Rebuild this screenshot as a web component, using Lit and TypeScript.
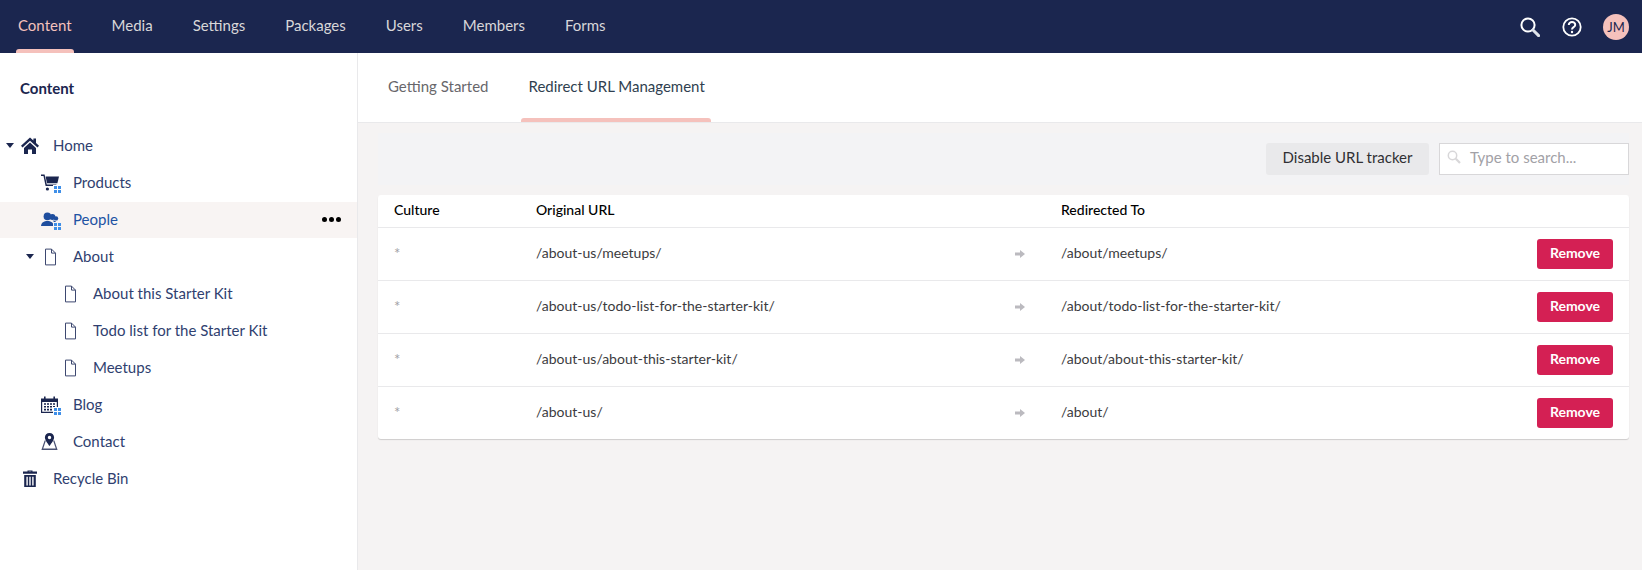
import { LitElement, html, css, svg } from "lit";
import { customElement } from "lit/decorators.js";

const NAV = ["Content", "Media", "Settings", "Packages", "Users", "Members", "Forms"];

const doc = svg`<path d="M1.5 .6H7.5L11.5 4.6V16.4H1.5Z" fill="#fff" stroke="#3d4870" stroke-width="1"/><path d="M7.5 .6V4.6H11.5" fill="none" stroke="#3d4870" stroke-width="1"/>`;

const ICONS: Record<string, any> = {
    home: svg`<path d="M9 .6L0 8.8 1.5 10.6 9 3.8 16.5 10.6 18 8.8 15 6V1.6H12.4V3.6Z"/><path d="M3 11L9 5.6 15 11V17H11V12.4H7V17H3Z"/>`,
    cart: svg`<path d="M0 .6H3.6L5.8 10.6H15.4V12H4.6L2.5 2H0Z"/><path d="M4.6 2.4H18L16.4 9.2H6Z"/><circle cx="6.4" cy="15" r="1.6"/><circle cx="13.6" cy="15" r="1.6"/>`,
    people: svg`<circle cx="6.4" cy="5.4" r="3.8"/><path d="M0 15C.3 11.4 3 10 6.4 10S12.4 11.4 12.8 15Z"/><circle cx="11.4" cy="6" r="3"/><path d="M11.6 9.6C14.4 9.8 15.8 11 16 13H13.6C13.4 11.6 12.8 10.6 11.6 9.6Z"/><circle cx="15" cy="7.4" r="2.2"/>`,
    calendar: svg`<path fill-rule="evenodd" d="M0 2.4H3V.4H4.6V2.4H12.4V.4H14V2.4H17V17H0ZM1.2 6V15.8H15.8V6Z"/><path d="M3 7.2H5V8.8H3ZM6 7.2H8V8.8H6ZM9 7.2H11V8.8H9ZM12 7.2H14V8.8H12ZM3 10H5V11.6H3ZM6 10H8V11.6H6ZM9 10H11V11.6H9ZM12 10H14V11.6H12ZM3 12.8H5V14.4H3ZM6 12.8H8V14.4H6ZM9 12.8H11V14.4H9Z"/>`,
    pin: svg`<path fill-rule="evenodd" d="M8.5 0C5.7 0 3.9 2 3.9 4.4 3.9 7 6.9 10.6 8.5 13 10.1 10.6 13.1 7 13.1 4.4 13.1 2 11.3 0 8.5 0ZM8.5 2.8A1.7 1.7 0 1 1 8.5 6.2 1.7 1.7 0 1 1 8.5 2.8Z"/><path d="M3.6 7.6H4.9L2.2 15.6H14.8L12.1 7.6H13.4L16.6 17H.4Z" fill-opacity=".8"/>`,
    trash: svg`<path d="M6.5 1.6V.4H11.5V1.6H16V3.8H2V1.6ZM7.8 1.6H10.2V1.2H7.8Z"/><path fill-rule="evenodd" d="M3.2 5H14.8V17H3.2ZM5.4 6.8V15.4H6.8V6.8ZM8.3 6.8V15.4H9.7V6.8ZM11.2 6.8V15.4H12.6V6.8Z"/>`,
};

const TREE = [
    { label: "Home", indent: 0, icon: "home", caret: true },
    { label: "Products", indent: 1, icon: "cart", badge: true },
    { label: "People", indent: 1, icon: "people", badge: true, active: true },
    { label: "About", indent: 1, icon: "doc", caret: true },
    { label: "About this Starter Kit", indent: 2, icon: "doc" },
    { label: "Todo list for the Starter Kit", indent: 2, icon: "doc" },
    { label: "Meetups", indent: 2, icon: "doc" },
    { label: "Blog", indent: 1, icon: "calendar", badge: true },
    { label: "Contact", indent: 1, icon: "pin" },
    { label: "Recycle Bin", indent: 0, icon: "trash" },
];

const REDIRECTS = [
    ["/about-us/meetups/", "/about/meetups/"],
    ["/about-us/todo-list-for-the-starter-kit/", "/about/todo-list-for-the-starter-kit/"],
    ["/about-us/about-this-starter-kit/", "/about/about-this-starter-kit/"],
    ["/about-us/", "/about/"],
];

@customElement("app-root")
export class AppRoot extends LitElement {
    static styles = css`
        :host {
            display: block;
            height: 570px;
            overflow: hidden;
            font-family: "Lato", "Open Sans", sans-serif;
            font-size: 15px;
            color: #1b264f;
            background: #fff;
        }
        .topbar {
            height: 53px;
            background: #1b264f;
            display: flex;
            align-items: stretch;
            justify-content: space-between;
            padding: 0 13px 0 0;
        }
        .nav {
            display: flex;
            padding-left: 18px;
            gap: 40px;
        }
        .nav-item {
            position: relative;
            line-height: 50px;
            color: #d8d7d9;
            white-space: nowrap;
        }
        .nav-item.on {
            color: #f5c1bc;
        }
        .nav-item.on::after {
            content: "";
            position: absolute;
            left: -2px;
            right: -2px;
            bottom: 0;
            height: 4px;
            background: #f5c1bc;
            border-radius: 3px 3px 0 0;
        }
        .tools {
            display: flex;
            align-items: center;
        }
        .tools svg {
            display: block;
        }
        .avatar {
            width: 26px;
            height: 26px;
            margin-left: 21px;
            border-radius: 50%;
            background: #f5c1bc;
            color: #1b264f;
            font-size: 13px;
            display: flex;
            align-items: center;
            justify-content: center;
        }
        .help {
            margin-left: 22px;
        }
        .body {
            display: flex;
            height: 517px;
        }
        .sidebar {
            width: 358px;
            flex: none;
            box-sizing: border-box;
            border-right: 1px solid #e9e9eb;
        }
        .sidebar h1 {
            margin: 0;
            padding: 26px 0 0 20px;
            height: 75px;
            box-sizing: border-box;
            font-size: 15px;
            font-weight: 700;
            line-height: 18px;
        }
        .row {
            height: 36px;
            margin-bottom: 1px;
            display: flex;
            align-items: center;
            position: relative;
        }
        .row.active {
            background: #f8f4f3;
        }
        .label {
            color: #303f70;
            padding-bottom: 3px;
        }
        .row.active .label {
            color: #2152a3;
        }
        .caret {
            width: 0;
            height: 0;
            border-left: 4px solid transparent;
            border-right: 4px solid transparent;
            border-top: 5px solid #1b264f;
            margin-right: 7px;
            margin-top: -2px;
        }
        .icon-wrap {
            position: relative;
            width: 18px;
            height: 18px;
            margin-right: 14px;
            flex: none;
            display: flex;
            justify-content: center;
            color: #1b264f;
        }
        .row.active .icon-wrap {
            color: #1f4e9e;
        }
        .icon-wrap svg {
            display: block;
        }
        .badge {
            position: absolute;
            right: -2px;
            bottom: -1px;
            width: 8px;
            height: 8px;
            background: #fff;
        }
        .row.active .badge {
            background: #f8f4f3;
        }
        .dots {
            position: absolute;
            right: 16px;
            top: 15px;
            display: flex;
            gap: 2px;
        }
        .dots i {
            width: 5px;
            height: 5px;
            border-radius: 50%;
            background: #000;
        }
        .main {
            flex: 1;
            background: #f5f3f3;
            min-width: 0;
        }
        .tabs {
            height: 70px;
            background: #fff;
            border-bottom: 1px solid #e9e9eb;
            display: flex;
            padding-left: 23px;
            box-sizing: border-box;
        }
        .tab {
            position: relative;
            padding: 0 6px 0 7px;
            margin-right: 27px;
            line-height: 67px;
            color: #68676b;
        }
        .tab.on {
            color: #303f50;
        }
        .tab.on::after {
            content: "";
            position: absolute;
            left: 0;
            right: 0;
            bottom: 0;
            height: 4px;
            background: #f5c1bc;
            border-radius: 3px 3px 0 0;
        }
        .content {
            padding: 10px 13px 0 20px;
        }
        .toolbar {
            display: flex;
            justify-content: flex-end;
            align-items: center;
            gap: 10px;
            height: 32px;
            padding: 10px 0;
            margin-bottom: 10px;
            background: #f3f3f5;
        }
        .toggle {
            height: 32px;
            width: 163px;
            border: 0;
            border-radius: 3px;
            background: #e9e9eb;
            color: #303033;
            font: 15px "Lato", sans-serif;
            padding: 0 0 5px;
        }
        .search {
            width: 190px;
            height: 32px;
            box-sizing: border-box;
            background: #fff;
            border: 1px solid #d8d7d9;
            display: flex;
            align-items: center;
            gap: 9px;
            padding: 0 0 5px 7px;
            color: #a2a1a6;
            font-size: 15px;
        }
        .card {
            background: #fff;
            border-radius: 3px;
            box-shadow: 0 1px 1px rgba(0, 0, 0, 0.16);
        }
        .tr {
            display: grid;
            grid-template-columns: 142px 479px 46px 1fr auto;
            align-items: center;
            padding: 0 16px;
            height: 53px;
            box-sizing: border-box;
            border-top: 1px solid #e9e9eb;
            font-size: 14px;
            color: #3b3b3e;
        }
        .tr span {
            padding-bottom: 4px;
        }
        .tr.head {
            height: 32px;
            border-top: 0;
            color: #000;
            font-weight: 500;
        }
        .tr .star {
            color: #a2a1a6;
            padding: 0;
            margin-top: -3px;
            font-size: 15px;
        }
        .arrow {
            display: block;
        }
        .remove {
            width: 76px;
            height: 30px;
            border: 0;
            border-radius: 3px;
            background: #d42054;
            color: #fff;
            font: 700 14px "Lato", sans-serif;
            padding: 0 0 3px;
        }
    `;

    renderIcon(name: string) {
        if (name === "doc") {
            return html`<svg width="13" height="18" viewBox="0 0 13 17" fill="none">${doc}</svg>`;
        }
        return html`<svg width="18" height="18" viewBox="0 0 18 18" fill="currentColor">${ICONS[name]}</svg>`;
    }

    renderRow(r: (typeof TREE)[number]) {
        // caret sits 15px to the left of the icon, each level steps 20px
        const left = 21 + r.indent * 20;
        return html`
            <div class="row ${r.active ? "active" : ""}" style="padding-left:${r.caret ? left - 15 : left}px">
                ${r.caret ? html`<span class="caret"></span>` : ""}
                <span class="icon-wrap">
                    ${this.renderIcon(r.icon)}
                    ${r.badge
                        ? html`<span class="badge">
                              <svg width="8" height="8" viewBox="0 0 8 8" fill="#3f8fe8">
                                  <rect x="1" y="1" width="3" height="3"/><rect x="5" y="1" width="3" height="3"/>
                                  <rect x="1" y="5" width="3" height="3"/><rect x="5" y="5" width="3" height="3"/>
                              </svg>
                          </span>`
                        : ""}
                </span>
                <span class="label">${r.label}</span>
                ${r.active ? html`<span class="dots"><i></i><i></i><i></i></span>` : ""}
            </div>
        `;
    }

    render() {
        return html`
            <header class="topbar">
                <nav class="nav">
                    ${NAV.map((n, i) => html`<div class="nav-item ${i === 0 ? "on" : ""}">${n}</div>`)}
                </nav>
                <div class="tools">
                    <svg width="20" height="20" viewBox="0 0 20 20" fill="none" stroke="#fff">
                        <circle cx="8" cy="8" r="6.6" stroke-width="2"/>
                        <path d="M13 13L18.6 18.6" stroke-width="3" stroke-linecap="round" stroke="#dfe3ea"/>
                    </svg>
                    <svg class="help" width="20" height="20" viewBox="0 0 20 20" fill="none" stroke="#fff">
                        <circle cx="10" cy="10" r="8.7" stroke-width="1.8"/>
                        <path d="M6.8 8C6.8 3.8 13.4 4.2 13.2 8 13.1 10.4 10 10 10 12.6" stroke-width="2"/>
                        <circle cx="10" cy="15" r="1.2" fill="#fff" stroke="none"/>
                    </svg>
                    <div class="avatar">JM</div>
                </div>
            </header>
            <div class="body">
                <aside class="sidebar">
                    <h1>Content</h1>
                    ${TREE.map((r) => this.renderRow(r))}
                </aside>
                <main class="main">
                    <div class="tabs">
                        <div class="tab">Getting Started</div>
                        <div class="tab on">Redirect URL Management</div>
                    </div>
                    <div class="content">
                        <div class="toolbar">
                            <button class="toggle">Disable URL tracker</button>
                            <div class="search">
                                <svg width="14" height="14" viewBox="0 0 14 14" fill="none" stroke="#d8d7d9">
                                    <circle cx="5.5" cy="5.5" r="4.2" stroke-width="1.5"/>
                                    <path d="M8.8 8.8L13 13" stroke-width="2.2"/>
                                </svg>
                                Type to search...
                            </div>
                        </div>
                        <div class="card">
                            <div class="tr head">
                                <span>Culture</span><span>Original URL</span><span></span><span>Redirected To</span><span></span>
                            </div>
                            ${REDIRECTS.map(
                                ([from, to]) => html`
                                    <div class="tr">
                                        <span class="star">*</span>
                                        <span>${from}</span>
                                        <svg class="arrow" width="10" height="10" viewBox="0 0 10 10" fill="#bbbabf">
                                            <path d="M0 3.5H5V1L10 5 5 9V6.5H0Z"/>
                                        </svg>
                                        <span>${to}</span>
                                        <button class="remove">Remove</button>
                                    </div>
                                `
                            )}
                        </div>
                    </div>
                </main>
            </div>
        `;
    }
}
